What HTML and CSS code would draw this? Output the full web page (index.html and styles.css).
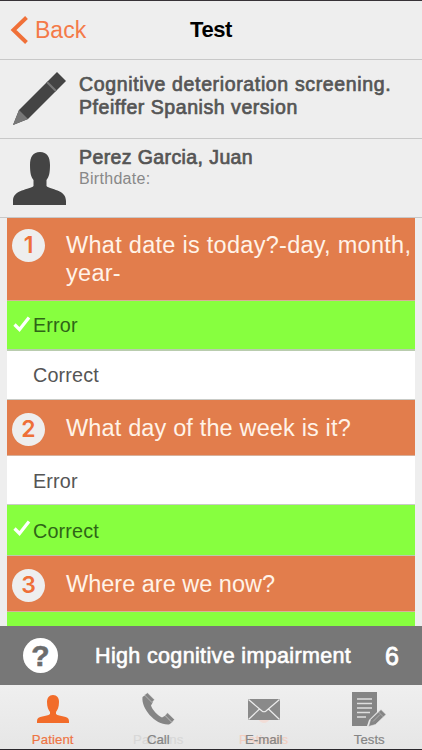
FILE: index.html
```html
<!DOCTYPE html>
<html lang="en">
<head>
    <meta charset="utf-8" />
    <meta name="viewport" content="width=device-width, initial-scale=1" />
    <title>Test</title>
    <link rel="stylesheet" href="styles.css">
</head>
<body>
    <div class="app">
        <header class="navbar">
            <a class="back">
                <svg width="18" height="28" viewBox="0 0 18 28"><path d="M16.500 1.500 L3.500 14 L16.500 26.500" fill="none" stroke="#f07038" stroke-width="4"/></svg>
                <span>Back</span>
            </a>
            <h1>Test</h1>
        </header>

        <section class="info test-info">
            <svg class="info-icon" width="54" height="54" viewBox="0 0 54 54">
                <path d="M44 0 L53 9 L15 47 L0 53 L6 38 Z" fill="#444"/>
                <path d="M6 38 L15 47 L0 53 Z" fill="#777"/>
                <path d="M34 10 L43 19" stroke="#777" stroke-width="2.2"/>
            </svg>
            <h2><span class="title-line">Cognitive deterioration screening.</span><br>Pfeiffer Spanish version</h2>
        </section>

        <section class="info patient-info">
            <svg class="info-icon" width="54" height="54" viewBox="0 0 54 54">
                <path d="M27 0 C34 0 37 5 37 13 C37 21 36 25 33.500 28 L33.500 34 C37 38 53 37 53 49 L53 53 L0 53 L0 49 C0 37 17 38 20.500 34 L20.500 28 C18 25 17 21 17 13 C17 5 20 0 27 0 Z" fill="#444"/>
            </svg>
            <div>
                <h2 class="name">Perez Garcia, Juan</h2>
                <p>Birthdate:</p>
            </div>
        </section>

        <main class="questions">
            <div class="question tall"><span class="number">1</span><p class="q1">What date is today?-day, month, year-</p></div>
            <div class="answer selected thick">
                <svg class="check" width="18" height="16" viewBox="0 0 18 16"><path d="M1.500 8.500 L6.500 13.500 L16 1.500" fill="none" stroke="#fff" stroke-width="3.2"/></svg>
                <span>Error</span>
            </div>
            <div class="answer short"><span>Correct</span></div>
            <div class="question"><span class="number">2</span><p class="q2">What day of the week is it?</p></div>
            <div class="answer short low"><span>Error</span></div>
            <div class="answer selected tall">
                <svg class="check" width="18" height="16" viewBox="0 0 18 16"><path d="M1.500 8.500 L6.500 13.500 L16 1.500" fill="none" stroke="#fff" stroke-width="3.2"/></svg>
                <span>Correct</span>
            </div>
            <div class="question"><span class="number">3</span><p>Where are we now?</p></div>
            <div class="answer selected"></div>
        </main>

        <div class="result">
            <span class="help">?</span>
            <span class="verdict">High cognitive impairment</span>
            <span class="score">6</span>
        </div>

        <nav class="tabs">
            <a class="tab active">
                <svg width="34" height="34" viewBox="0 0 34 34"><path d="M17 3 C21 3 23 6 23 10 C23 15 21.500 18 20 20 L20 22 C23 25 33 23 33 29 L33 31 L1 31 L1 29 C1 23 11 25 14 22 L14 20 C12.500 18 11 15 11 10 C11 6 13 3 17 3 Z" fill="#f26c2a"/></svg>
                <span>Patient</span>
            </a>
            <a class="tab">
                <svg width="34" height="34" viewBox="0 0 34 34">
                    <path d="M1.500 5 C0 17 15 33.500 28 32.500 L31 30.500 L24.500 23.500 L21 25.500 C16 23 11.500 18 10 13.500 L12 10 L5 2.500 Z" fill="#858585"/>
                    <path d="M3.500 3 L6.500 .8 L13.500 7.800 L11 10.500 Z M24 23.500 L26.500 20.800 L33.500 27.500 L31 30.500 Z" fill="#858585" stroke="#e6e6e6" stroke-width=".5"/>
                </svg>
                <span class="ghost">Patterns</span>
                <span>Call</span>
            </a>
            <a class="tab">
                <svg width="34" height="34" viewBox="0 0 34 34">
                    <path d="M10 26 Q17 36 24 26 Z" fill="#f2ddd7"/>
                    <path d="M1 7 H33 V28 H1 Z" fill="#8a8a8a"/>
                    <path d="M1.500 7.500 L15 19 Q17 20.500 19 19 L32.500 7.500 M1.500 27.500 L12.500 17 M32.500 27.500 L21.500 17" fill="none" stroke="#ececec" stroke-width="1.2"/>
                </svg>
                <span class="ghost warm">Patients</span>
                <span>E-mail</span>
            </a>
            <a class="tab">
                <svg width="36" height="36" viewBox="0 0 36 36">
                    <path d="M1 0 H26 V20 L18 28 L16 34 H1 Z" fill="#858585"/>
                    <path d="M6 7 H21 M6 11.500 H21 M6 16 H21 M6 20.500 H19 M6 25 H15" stroke="#dedede" stroke-width="1.6"/>
                    <path d="M17.500 34.500 L19.500 27.500 L30 17.500 L35 22.500 L24.500 32.500 Z" fill="#858585" stroke="#e9e9e9" stroke-width=".6"/>
                    <path d="M27.500 20 L32.500 25 M22 29.500 L29 22.500" stroke="#c4c4c4" stroke-width=".6"/>
                </svg>
                <span>Tests</span>
            </a>
        </nav>
    </div>
</body>
</html>
```

FILE: styles.css
```css
* {
    box-sizing: border-box;
}

body {
    margin: 0;
    background: #eee;
    font-family: "Liberation Sans", Arial, sans-serif;
    color: #555;
    overflow: hidden;
}

h1, h2, p {
    margin: 0;
    font-weight: normal;
}

svg {
    display: block;
    flex: none;
}

.app {
    display: flex;
    flex-direction: column;
    height: 750px;
    border-top: 1px solid #373237;
    border-bottom: 1px solid #29272c;
}

.navbar {
    display: grid;
    grid-template-columns: 1fr auto 1fr;
    align-items: center;
    flex: none;
    height: 59px;
    border-bottom: 1px solid #c8c8c8;
}

.back {
    display: flex;
    align-items: center;
    gap: 7px;
    padding-left: 10px;
    color: #f47a48;
    font-size: 23px;
}

.navbar h1 {
    color: #000;
    font-size: 22px;
    font-weight: bold;
    letter-spacing: -0.4px;
}

.info {
    display: flex;
    flex: none;
    height: 79px;
    padding: 12px 0 0 13px;
    gap: 12px;
    border-bottom: 1px solid #c8c8c8;
}

.patient-info {
    padding-top: 13px;
}

.info h2 {
    margin-top: 1px;
    font-size: 19.5px;
    line-height: 23px;
    color: #555;
    -webkit-text-stroke: 0.7px #555;
    letter-spacing: 0.55px;
}

.info .title-line {
    letter-spacing: 0.64px;
}

.info .name {
    margin-top: -6px;
    letter-spacing: 0.4px;
}

.info p {
    font-size: 16px;
    line-height: 20px;
    color: #888;
    letter-spacing: 0.3px;
}

.questions {
    flex: 1;
    min-height: 0;
    overflow: hidden;
    margin: 0 7px;
    width: 408px;
}

.question {
    display: flex;
    height: 56px;
    padding: 13px 0 0 5px;
    gap: 21px;
    background: #e27d4c;
    border-bottom: 1px solid #d8b09a;
    color: #fff3e8;
    font-size: 23.5px;
    line-height: 28px;
}

.question.tall {
    height: 83px;
    padding-top: 11px;
}

.question p {
    flex: 1;
    margin-top: 1px;
}

.question.tall p {
    margin-top: 2px;
    margin-right: -8px;
}

.question .q1 {
    letter-spacing: 0.28px;
}

.question .q2 {
    letter-spacing: 0.15px;
}

.number {
    flex: none;
    width: 33px;
    height: 33px;
    border-radius: 50%;
    background: #eee;
    color: #ee6f38;
    font-family: Inter, "Liberation Sans", sans-serif;
    font-size: 23px;
    font-weight: 600;
    line-height: 33px;
    text-align: center;
}

.answer {
    position: relative;
    display: flex;
    align-items: center;
    height: 50px;
    padding-left: 26px;
    background: #fff;
    border-bottom: 1px solid #c9cbc7;
    color: #555;
    font-size: 19.8px;
    letter-spacing: 0.15px;
}

.answer.short {
    height: 49px;
}

.answer.low {
    padding-top: 2px;
}

.answer.tall {
    height: 51px;
    padding-top: 2px;
}

.answer.selected {
    background: #87ff3f;
    border-bottom-color: #b9ccae;
    color: #2f6517;
}

.answer.thick {
    border-bottom-width: 2px;
}

.check {
    position: absolute;
    left: 6px;
    top: 15px;
}

.result {
    display: flex;
    align-items: center;
    flex: none;
    height: 59px;
    padding: 0 23px;
    background: #777;
    color: #fff;
    font-size: 21.5px;
}

.help {
    width: 35px;
    height: 35px;
    border-radius: 50%;
    background: #fff;
    color: #6c6c6c;
    font-size: 30px;
    font-weight: bold;
    line-height: 35px;
    text-align: center;
    -webkit-text-stroke: 0.6px #6c6c6c;
}

.verdict {
    flex: 1;
    margin-left: 37px;
    padding-top: 2px;
    letter-spacing: 0.35px;
    -webkit-text-stroke: 0.6px #fff;
}

.score {
    padding-top: 1px;
    font-size: 25px;
    -webkit-text-stroke: 0.8px #fff;
}

.tabs {
    display: grid;
    grid-template-columns: repeat(4, 1fr);
    flex: none;
    height: 64px;
    background: linear-gradient(#efefef, #e6e6e6);
}

.tab {
    position: relative;
    display: flex;
    flex-direction: column;
    align-items: center;
    justify-content: space-between;
    padding: 7px 0 1px;
    color: #858585;
    font-size: 13.2px;
    line-height: 16px;
}

.tab.active {
    color: #ee7544;
    letter-spacing: 0.1px;
}

.tab span {
    position: relative;
    -webkit-text-stroke: 0.2px;
}

/* label of the previous tab set, fading out behind the current one */
.tab .ghost {
    position: absolute;
    bottom: 1px;
    color: #d8d8d8;
    letter-spacing: 0.2px;
}

.tab .warm {
    color: #f2cfc2;
}
```
